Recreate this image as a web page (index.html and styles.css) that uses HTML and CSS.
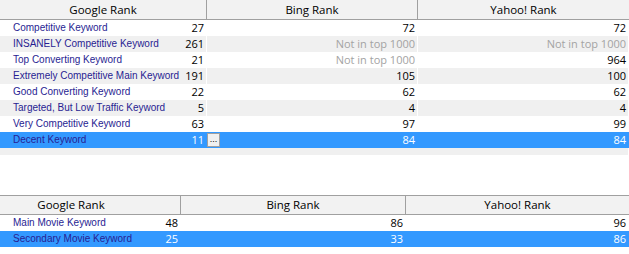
FILE: index.html
```html
<!DOCTYPE html>
<html>
<head>
<meta charset="utf-8">
<link rel="stylesheet" href="styles.css">
</head>
<body>
<div class="grid grid-top">
  <div class="row head">
    <div class="hc">Google Rank</div>
    <div class="hc">Bing Rank</div>
    <div class="hc last">Yahoo! Rank</div>
  </div>
  <div class="row">
    <div class="c kw"><span class="kt">Competitive Keyword</span><span>27</span></div>
    <div class="c">72</div>
    <div class="c">72</div>
  </div>
  <div class="row alt">
    <div class="c kw"><span class="kt">INSANELY Competitive Keyword</span><span>261</span></div>
    <div class="c na">Not in top 1000</div>
    <div class="c na">Not in top 1000</div>
  </div>
  <div class="row">
    <div class="c kw"><span class="kt">Top Converting Keyword</span><span>21</span></div>
    <div class="c na">Not in top 1000</div>
    <div class="c">964</div>
  </div>
  <div class="row alt">
    <div class="c kw"><span class="kt">Extremely Competitive Main Keyword</span><span>191</span></div>
    <div class="c">105</div>
    <div class="c">100</div>
  </div>
  <div class="row">
    <div class="c kw"><span class="kt">Good Converting Keyword</span><span>22</span></div>
    <div class="c">62</div>
    <div class="c">62</div>
  </div>
  <div class="row alt">
    <div class="c kw"><span class="kt">Targeted, But Low Traffic Keyword</span><span>5</span></div>
    <div class="c">4</div>
    <div class="c">4</div>
  </div>
  <div class="row">
    <div class="c kw"><span class="kt">Very Competitive Keyword</span><span>63</span></div>
    <div class="c">97</div>
    <div class="c">99</div>
  </div>
  <div class="row sel">
    <div class="c kw"><span class="kt">Decent Keyword</span><span>11</span><span class="ell">...</span></div>
    <div class="c">84</div>
    <div class="c">84</div>
  </div>
  <div class="pad"></div>
</div>

<div class="grid grid-bottom">
  <div class="row head">
    <div class="hc off">Google Rank</div>
    <div class="hc">Bing Rank</div>
    <div class="hc last">Yahoo! Rank</div>
  </div>
  <div class="row">
    <div class="c kw"><span class="kt">Main Movie Keyword</span><span>48</span></div>
    <div class="c">86</div>
    <div class="c">96</div>
  </div>
  <div class="row sel">
    <div class="c kw"><span class="kt">Secondary Movie Keyword</span><span>25</span></div>
    <div class="c">33</div>
    <div class="c">86</div>
  </div>
</div>
</body>
</html>
```

FILE: styles.css
```css
html, body {
  margin: 0;
  padding: 0;
  background: #ffffff;
}
body {
  width: 629px;
  height: 254px;
  overflow: hidden;
  font-family: "Open Sans", "Noto Sans", sans-serif;
}
.grid {
  width: 629px;
}
.grid-top .row {
  display: grid;
  grid-template-columns: 207px 211px 211px;
}
.grid-bottom {
  margin-top: 40px;
  border-top: 1px solid #a0a0a0;
}
.grid-bottom .row {
  display: grid;
  grid-template-columns: 181px 225px 223px;
}
.head {
  background: #f2f2f2;
  border-bottom: 1px solid #a0a0a0;
  height: 19px;
}
.grid-bottom .head {
  height: 18px;
}
.hc {
  border-right: 1px solid #a0a0a0;
  text-align: center;
  font-size: 11.5px;
  line-height: 19px;
  color: #000;
}
.grid-bottom .hc {
  line-height: 18px;
}
.hc.last {
  border-right: none;
}
.hc.off {
  padding-right: 38px;
}
.row:not(.head) {
  height: 16px;
  line-height: 16px;
  font-size: 11px;
  color: #000;
}
.c {
  border-right: 1px solid #ffffff;
  padding-right: 2px;
  text-align: right;
  white-space: nowrap;
  overflow: visible;
}
.c.na {
  color: #a3a3a3;
}
.alt .c {
  background: #f0f0f0;
}
.sel .c {
  background: #3399ff;
  color: #ffffff;
  border-right-color: #3399ff;
}
.kw {
  display: flex;
  justify-content: space-between;
  align-items: center;
  padding-left: 13px;
  position: relative;
}
.kt {
  font-family: "Liberation Sans", Arial, sans-serif;
  font-size: 10px;
  color: #281d92;
}
.sel .kt {
  color: #281d92;
}
.ell {
  position: absolute;
  left: 207px;
  top: 1px;
  width: 11px;
  height: 12px;
  background: #f0f0f0;
  border: 1px solid #a0a0a0;
  color: #000;
  font-family: "Liberation Sans", Arial, sans-serif;
  font-size: 9px;
  line-height: 10px;
  text-align: center;
  z-index: 2;
}
.pad {
  height: 7px;
  width: 628px;
  background: #f0f0f0;
}
```
